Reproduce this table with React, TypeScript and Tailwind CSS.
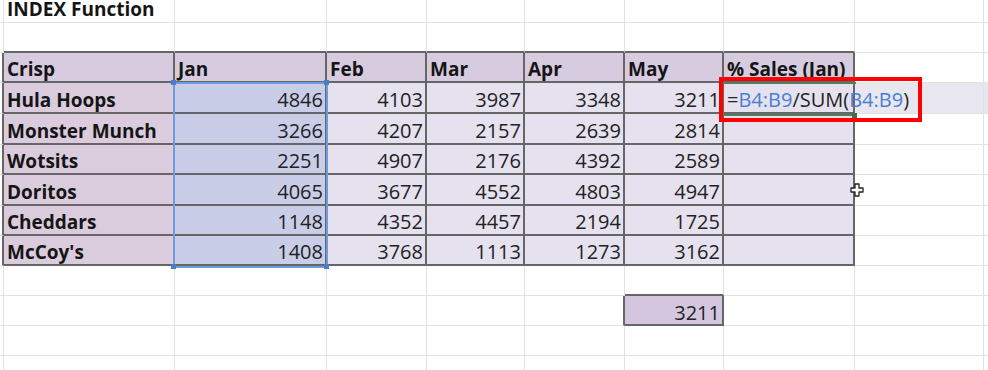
import React from "react";

const colWidths = [4, 171, 152, 100, 98, 100, 99, 131, 129, 200];
const rowHeights = [23, 30, 30, 31, 31, 30, 31, 30, 30, 30, 30, 30, 30];

const headers = ["Crisp", "Jan", "Feb", "Mar", "Apr", "May", "% Sales (Jan)"];

const data: [string, number, number, number, number, number][] = [
  ["Hula Hoops", 4846, 4103, 3987, 3348, 3211],
  ["Monster Munch", 3266, 4207, 2157, 2639, 2814],
  ["Wotsits", 2251, 4907, 2176, 4392, 2589],
  ["Doritos", 4065, 3677, 4552, 4803, 4947],
  ["Cheddars", 1148, 4352, 4457, 2194, 1725],
  ["McCoy's", 1408, 3768, 1113, 1273, 3162],
];

const inTable = (r: number, c: number) => r >= 2 && r <= 8 && c >= 1 && c <= 7;
const isResult = (r: number, c: number) => r === 10 && c === 6;

function cellClasses(r: number, c: number) {
  const darkRight =
    inTable(r, c) || (c === 0 && r >= 2 && r <= 8) || isResult(r, c) || (r === 10 && c === 5);
  const darkBottom =
    inTable(r, c) || (r === 1 && c >= 1 && c <= 7) || isResult(r, c) || (r === 9 && c === 6);

  let bg = "bg-white";
  if (r === 2 && c >= 1 && c <= 7) bg = "bg-[#d6cbdf]";
  else if (r >= 3 && r <= 8 && c === 1) bg = "bg-[#dacbdd]";
  else if (r >= 3 && r <= 8 && c === 2) bg = "bg-[#c9cde8]";
  else if (r >= 3 && r <= 8 && c >= 3 && c <= 7) bg = "bg-[#e5e1ee]";
  else if (r === 3 && c >= 8) bg = "bg-[#e8e6ef]";
  else if (isResult(r, c)) bg = "bg-[#d4c6df]";

  return [
    "flex items-end overflow-visible whitespace-nowrap",
    darkRight ? "border-r-2 border-r-[#666]" : "border-r border-r-[#e2e2e2]",
    darkBottom ? "border-b-2 border-b-[#666]" : "border-b border-b-[#e2e2e2]",
    bg,
  ].join(" ");
}

function cellContent(r: number, c: number) {
  if (r === 0 && c === 1)
    return <span className="pl-[3px] pb-[3px] text-[19px] font-bold text-[#151515]">INDEX Function</span>;
  if (r === 2 && c >= 1 && c <= 7)
    return <span className="pl-[3px] pb-[2px] text-[19px] font-bold text-[#151515]">{headers[c - 1]}</span>;
  if (r >= 3 && r <= 8) {
    const row = data[r - 3];
    if (c === 1)
      return <span className="pl-[3px] pb-[2px] text-[19px] font-bold text-[#151515]">{row[0]}</span>;
    if (c >= 2 && c <= 6)
      return <span className="ml-auto pr-[2px] pb-[2px] text-[20px] text-[#222]">{row[c - 1]}</span>;
    if (c === 7 && r === 3)
      return (
        <span className="relative z-10 pl-[3px] pb-[2px] text-[20px] text-[#222]">
          =<span className="text-[#4a80d2]">B4:B9</span>/SUM(<span className="text-[#4a80d2]">B4:B9</span>)
        </span>
      );
  }
  if (isResult(r, c)) return <span className="ml-auto pr-[2px] pb-[1px] text-[20px] text-[#222]">3211</span>;
  return null;
}

export default function App() {
  return (
    <div className="relative h-[370px] w-[988px] overflow-hidden bg-white font-['Open_Sans',sans-serif] leading-none">
      <div className="grid grid-cols-[4px_171px_152px_100px_98px_100px_99px_131px_129px_200px] grid-rows-[23px_30px_30px_31px_31px_30px_31px_30px_30px_30px_30px_30px_30px]">
        {rowHeights.map((_, r) =>
          colWidths.map((_, c) => (
            <div key={`${r}-${c}`} className={cellClasses(r, c)}>
              {cellContent(r, c)}
            </div>
          ))
        )}
      </div>

      {/* selection B4:B9 */}
      <div className="absolute left-[173px] top-[82px] h-[186px] w-[155px] border-2 border-[#6d9bdc]" />
      {[
        "left-[171px] top-[80px]",
        "left-[324px] top-[80px]",
        "left-[171px] top-[264px]",
        "left-[324px] top-[264px]",
      ].map((p) => (
        <div key={p} className={`absolute ${p} h-[5px] w-[5px] bg-[#4a7cc9]`} />
      ))}

      {/* editing cell outline */}
      <div className="absolute left-[722px] top-[82px] h-[34px] w-[134px] border-y-2 border-[#4f8062]" />
      <div className="absolute left-[852px] top-[113px] h-[5px] w-[5px] bg-[#3c6e50]" />

      {/* red highlight */}
      <div className="absolute left-[719px] top-[77px] h-[45px] w-[203px] border-4 border-[#ff0000]" />

      {/* cursor */}
      <svg className="absolute left-[850px] top-[183px]" width="14" height="14" viewBox="0 0 14 14">
        <path
          d="M5 1h4v4h4v4H9v4H5V9H1V5h4z"
          fill="#fff"
          stroke="#222"
          strokeWidth="1.3"
          strokeLinejoin="round"
        />
      </svg>
    </div>
  );
}
